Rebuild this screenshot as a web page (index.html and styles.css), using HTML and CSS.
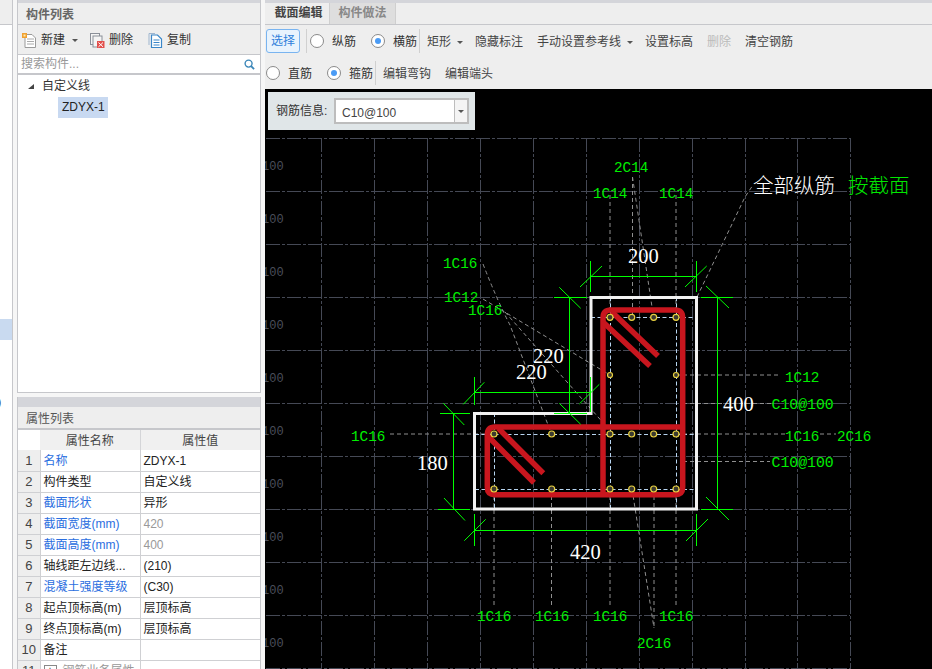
FILE: index.html
```html
<!DOCTYPE html>
<html lang="zh">
<head>
<meta charset="utf-8">
<title>截面编辑</title>
<link rel="stylesheet" href="styles.css">
</head>
<body>
<div class="app">
  <aside class="strip">
    <div class="strip-head"></div>
    <div class="strip-sel"></div>
    <div class="strip-text">)</div>
  </aside>

  <div class="left">
    <section class="panel panel-list">
      <div class="band band-thin"></div>
      <div class="panel-title">构件列表</div>
      <div class="list-tools">
        <span class="ltool ltool-new">
          <svg class="ico" viewBox="0 0 15 15"><path d="M3 1.5H10L13.5 5V14.5H3Z" fill="#fff" stroke="#9a9a9a"/><path d="M5 6H12M5 8.5H12M5 11H12" stroke="#aaa"/><rect x="0" y="0" width="5" height="5" fill="#f0a030"/><rect x="1.5" y="1.5" width="2" height="2" fill="#fde9b0"/></svg>
          新建<i class="caret"></i>
        </span>
        <span class="ltool ltool-del">
          <svg class="ico" viewBox="0 0 15 15"><rect x="0.5" y="0.5" width="9" height="11" fill="#f4f4f4" stroke="#8a8f98"/><rect x="3" y="3" width="9" height="11" fill="#f4f4f4" stroke="#8a8f98"/><rect x="7" y="8" width="7.5" height="7" fill="#e2504c"/><path d="M8.5 9.5L13 13.8M13 9.5L8.5 13.8" stroke="#fff"/></svg>
          删除
        </span>
        <span class="ltool ltool-copy">
          <svg class="ico" viewBox="0 0 15 15"><path d="M1 12V0.5H7" fill="none" stroke="#9fb6cf"/><path d="M3.5 2H9.5L13.5 6V14.5H3.5Z" fill="#fff" stroke="#3a86c8" stroke-width="1.2"/><path d="M5.5 7H11.5M5.5 9.5H11.5M5.5 12H11.5" stroke="#3a86c8"/></svg>
          复制
        </span>
      </div>
      <div class="search">
        <span>搜索构件...</span>
        <svg class="search-ico" viewBox="0 0 12 12"><circle cx="5" cy="5" r="3.8" fill="none" stroke="#3a86b8" stroke-width="1.5"/><path d="M7.8 7.8L11 11" stroke="#3a86b8" stroke-width="2"/></svg>
      </div>
      <div class="tree">
        <div class="tree-root"><i class="tree-arrow"></i>自定义线</div>
        <div class="tree-leaf">ZDYX-1</div>
      </div>
    </section>

    <section class="panel panel-props">
      <div class="band band-thick"></div>
      <div class="panel-title panel-title-props">属性列表</div>
      <table class="props">
        <colgroup><col class="c-num"><col class="c-name"><col class="c-val"></colgroup>
        <thead><tr><th class="blank"></th><th>属性名称</th><th>属性值</th></tr></thead>
        <tbody>
          <tr><td class="num">1</td><td class="blue">名称</td><td>ZDYX-1</td></tr>
          <tr><td class="num">2</td><td>构件类型</td><td>自定义线</td></tr>
          <tr><td class="num">3</td><td class="blue">截面形状</td><td>异形</td></tr>
          <tr><td class="num">4</td><td class="blue">截面宽度(mm)</td><td class="muted">420</td></tr>
          <tr><td class="num">5</td><td class="blue">截面高度(mm)</td><td class="muted">400</td></tr>
          <tr><td class="num">6</td><td>轴线距左边线...</td><td>(210)</td></tr>
          <tr><td class="num">7</td><td class="blue">混凝土强度等级</td><td>(C30)</td></tr>
          <tr><td class="num">8</td><td>起点顶标高(m)</td><td>层顶标高</td></tr>
          <tr><td class="num">9</td><td>终点顶标高(m)</td><td>层顶标高</td></tr>
          <tr><td class="num">10</td><td>备注</td><td></td></tr>
          <tr><td class="num">11</td><td class="muted"><i class="plus">+</i>钢筋业务属性</td><td></td></tr>
        </tbody>
      </table>
    </section>
  </div>

  <main class="right">
    <div class="band band-thin"></div>
    <div class="tabs">
      <span class="tab tab-on">截面编辑</span>
      <span class="tab tab-off">构件做法</span>
    </div>
    <div class="toolbar">
      <div class="row row-1">
        <button class="btn-select">选择</button>
        <i class="sep sep-a"></i>
        <label class="radio"><i class="dot"></i>纵筋</label>
        <label class="radio radio-on"><i class="dot"></i>横筋</label>
        <i class="sep sep-b"></i>
        <div class="tools">
          <span>矩形<i class="caret caret-tight"></i></span>
          <span>隐藏标注</span>
          <span>手动设置参考线<i class="caret caret-tight"></i></span>
          <span>设置标高</span>
          <span class="disabled">删除</span>
          <span>清空钢筋</span>
        </div>
      </div>
      <div class="row row-2">
        <label class="radio"><i class="dot"></i>直筋</label>
        <label class="radio radio-on"><i class="dot"></i>箍筋</label>
        <i class="sep sep-c"></i>
        <div class="tools">
          <span>编辑弯钩</span>
          <span>编辑端头</span>
        </div>
      </div>
    </div>
    <div class="canvas">
      <div class="info">
        <span class="info-label">钢筋信息:</span>
        <div class="combo"><span class="combo-text">C10@100</span><span class="combo-btn"><i class="caret"></i></span></div>
      </div>
      <svg class="draw" viewBox="265 89 667 580" width="667" height="580">
        <g class="grid">
          <path d="M266 138.5H850M266 191.5H850M266 244.5H850M266 297.5H850M266 350.5H850M266 403.5H850M266 456.5H850M266 509.5H850M266 562.5H850M266 615.5H850M266 668.5H850"/>
          <path d="M321.5 138V669M374.5 138V669M427.5 138V669M480.5 138V669M533.5 138V669M586.5 138V669M639.5 138V669M692.5 138V669M745.5 138V669M797.5 138V669M850.5 138V669"/>
        </g>
        <g class="axis">
          <text x="262" y="169.5">100</text><text x="262" y="222.5">100</text><text x="262" y="275.5">100</text><text x="262" y="328.5">100</text><text x="262" y="381.5">100</text>
          <text x="262" y="434.5">100</text><text x="262" y="487.5">100</text><text x="262" y="540.5">100</text><text x="262" y="593.5">100</text><text x="262" y="646.5">100</text>
        </g>
        <g class="leader">
          <path d="M610 195V317M676 195V317M632.5 177V317M632.5 177L653.5 317"/>
          <path d="M697 297L745 197L753 185"/>
          <path d="M494 489V605M551.5 489V605M610 489V605M676 489V605M654 489V628M632 489L654 628"/>
          <path d="M676 375H780M683 403.5H771M676 434H785M820 434H836M683 461.5H770"/>
          <path d="M390 434H494M483 264Q497 300 510 325L551.5 434M483 299L610 375M505 312L606 426"/>
        </g>
        <g class="axisline">
          <path d="M591 317.5H697M475 434.5H697M475 489.5H697M494.5 413V509M610.5 297V509M676.5 297V509"/>
        </g>
        <path class="concrete" d="M591 297.5H696.5V509H474.5V413.5H591Z"/>
        <g class="rebar">
          <path d="M603 427V318Q603 310 611 310H675Q682.7 310 682.7 318V487Q682.7 494.7 675 494.7H495Q487.3 494.7 487.3 487V435Q487.3 427 495 427H682.7M603 427V494.7"/>
          <path d="M611.7 311.7L658 356M602.7 321.7L650 366M498.3 428.3L543.3 473.3M486.7 435L534 482.7"/>
        </g>
        <g class="bars">
          <circle cx="610" cy="317.3" r="3"/><circle cx="631.7" cy="317.3" r="3"/><circle cx="653.7" cy="317.3" r="3"/><circle cx="676" cy="317.3" r="3"/>
          <circle cx="610" cy="375" r="2.5"/><circle cx="676" cy="375" r="2.5"/>
          <circle cx="494" cy="434" r="3"/><circle cx="551.7" cy="434" r="3"/><circle cx="610" cy="434" r="3"/><circle cx="631.7" cy="434" r="3"/><circle cx="653.7" cy="434" r="3"/><circle cx="676" cy="434" r="3"/>
          <circle cx="494" cy="489" r="3"/><circle cx="551.7" cy="489" r="3"/><circle cx="610" cy="489" r="3"/><circle cx="631.7" cy="489" r="3"/><circle cx="653.7" cy="489" r="3"/><circle cx="676" cy="489" r="3"/>
        </g>
        <g class="dim-lines">
          <path d="M590.5 276.5H696.5M590.5 261V292M696.5 261V292M685 287L706.7 266M580 287L602 266"/>
          <path d="M717.5 297V509M700.7 297.5H733M701 509.5H733M706 286L729 308M706 497L729 520"/>
          <path d="M569.5 297V413M554 297.5H587M554 413.5H587M559.3 287.3L580.7 308.3M559.3 403.3L580.7 424.3"/>
          <path d="M474.5 392.5H590.5M474.5 377V405M590.5 377V412M463.3 404.3L484.3 382.3M579.3 404L599.3 384.3"/>
          <path d="M453.5 413V509M440 413.5H470M438 509.5H470M443.3 403.3L464.3 425M444 498L465 520.5"/>
          <path d="M474.5 530.5H696.5M474.5 514V546M696.5 514V546M464.3 540.7L485.7 519.3M686 541L708 519"/>
        </g>
        <g class="rebar-text">
          <text x="614" y="171.7">2C14</text><text x="593" y="197.7">1C14</text><text x="659" y="197.7">1C14</text>
          <text x="443" y="267.7">1C16</text><text x="444" y="301.7">1C12</text><text x="468" y="315">1C16</text>
          <text x="351" y="441">1C16</text>
          <text x="785" y="381.7">1C12</text><text class="wide" x="771.5" y="409.3">C10@100</text>
          <text x="785" y="440.7">1C16</text><text x="837" y="440.7">2C16</text><text class="wide" x="771.5" y="467.3">C10@100</text>
          <text x="477" y="620.7">1C16</text><text x="535" y="620.7">1C16</text><text x="593" y="620.7">1C16</text><text x="659" y="620.7">1C16</text>
          <text x="637" y="647.7">2C16</text>
        </g>
        <g class="dim-text">
          <text x="628" y="262.7">200</text><text x="533" y="362.7">220</text><text x="516" y="379">220</text>
          <text x="417" y="470">180</text><text x="723" y="411">400</text><text x="570" y="559">420</text>
        </g>
        <text class="note note-white" x="753" y="193">全部纵筋</text>
        <text class="note note-green" x="848" y="193">按截面</text>
      </svg>
    </div>
  </main>
</div>
</body>
</html>
```

FILE: styles.css
```css
* { box-sizing: border-box; }
html, body { margin: 0; padding: 0; }
body {
  width: 932px;
  height: 669px;
  overflow: hidden;
  background: #f6f6f6;
  font: 12px/1.2 "Liberation Sans", "Noto Sans CJK SC", sans-serif;
  color: #333;
}
i { font-style: normal; }

.app { display: flex; width: 932px; height: 669px; }

/* far-left cropped navigator */
.strip { width: 13px; flex: none; height: 669px; background: #fff; border-right: 1px solid #c6c7cb; }
.strip-head { height: 25px; background: #eee; border-bottom: 1px solid #c6c7cb; }
.strip-sel { height: 21px; margin-top: 294px; background: #c9daf0; }
.strip-text { margin: 54px 0 0 -3px; font-size: 13px; color: #333; }

/* left column */
.left { width: 244px; flex: none; margin-left: 4px; margin-right: 4px; display: flex; flex-direction: column; height: 669px; }
.panel { background: #fff; border-left: 1px solid #c6c7cb; border-right: 1px solid #c6c7cb; display: flex; flex-direction: column; }
.panel-list { height: 393px; border-bottom: 1px solid #c6c7cb; }
.panel-props { margin-top: 4px; flex: 1; overflow: hidden; }

.band { background: #d4d5da; flex: none; }
.band-thin { height: 3px; }
.band-thick { height: 10px; }

.panel-title { height: 22px; flex: none; padding: 5px 0 0 8px; background: #eee; border-bottom: 1px solid #c6c7cb; color: #666; font-weight: bold; font-size: 12px; }
.panel-title-props { height: 23px; border-bottom: 2px solid #c6c7cb; padding-top: 5px; font-weight: normal; color: #555; }

.list-tools { height: 30px; flex: none; display: flex; align-items: center; background: #eee; border-bottom: 1px solid #c6c7cb; padding: 2px 0 0 4px; }
.ltool { display: flex; align-items: center; color: #333; }
.ico { width: 15px; height: 15px; margin-right: 4px; flex: none; }
.ltool-del { margin-left: 12px; }
.ltool-copy { margin-left: 15px; }
.caret { display: inline-block; width: 0; height: 0; border-left: 3px solid transparent; border-right: 3px solid transparent; border-top: 3px solid #555; margin-left: 7px; vertical-align: middle; }
.caret-tight { margin-left: 6px; margin-right: -2px; }

.search { height: 20px; flex: none; display: flex; align-items: center; justify-content: space-between; padding: 0 5px 0 3px; border-bottom: 2px solid #c6c7cb; color: #999; background: #fff; }
.search-ico { width: 11px; height: 11px; }

.tree { flex: 1; background: #fff; }
.tree-root { height: 22px; display: flex; align-items: center; padding-left: 24px; color: #333; position: relative; }
.tree-arrow { width: 0; height: 0; border-left: 6px solid transparent; border-bottom: 5px solid #444; margin-left: -14px; margin-right: 8px; }
.tree-leaf { width: 50px; height: 21px; margin-left: 40px; padding-left: 4px; line-height: 21px; background: #c8d9f1; color: #222; }

/* property table */
.props { width: 242px; table-layout: fixed; border-collapse: collapse; }
.c-num { width: 22px; }
.c-name { width: 100px; }
.props th { height: 20px; padding: 2px 0 0; background: #f0f0f0; font-weight: normal; color: #444; border-right: 1px solid #d4d5d8; text-align: center; }
.props th.blank { background: #fff; border-right: 0; }
.props td { height: 21px; padding: 2px 0 0 3px; border-bottom: 1px solid #cfd0d3; border-right: 1px solid #cfd0d3; color: #222; white-space: nowrap; overflow: hidden; }
.props td:last-child, .props th:last-child { border-right: 0; }
.props td.num { padding: 1px 0 0; background: #eee; text-align: center; color: #444; font-size: 13px; }
.props td.blue { color: #2a6ee0; }
.props td.muted { color: #999; }
.plus { display: inline-block; width: 13px; height: 13px; margin-right: 6px; border: 1px solid #888; text-align: center; line-height: 10px; color: #444; }

/* right column */
.right { flex: 1; display: flex; flex-direction: column; min-width: 0; height: 669px; }
.tabs { height: 22px; flex: none; display: flex; background: #eee; border-bottom: 1px solid #c6c7cb; font-weight: bold; }
.tab { display: flex; align-items: center; justify-content: center; height: 21px; }
.tab-on { width: 65px; padding-left: 3px; color: #444; border-right: 1px solid #cfcfcf; }
.tab-off { width: 66px; background: #dedede; color: #888; border-right: 1px solid #cfcfcf; }

.toolbar { height: 64px; flex: none; background: #eee; }
.row { height: 32px; display: flex; align-items: center; }
.row-1 { padding-left: 1px; }
.row-2 { padding-left: 1px; }
.btn-select { width: 34px; height: 24px; padding: 0; border: 1px solid #79b4f0; border-radius: 3px; background: #e8f3fd; color: #2f7fdb; font: inherit; }
.sep { display: block; width: 1px; height: 24px; background: #d0d0d0; flex: none; }
.sep-a { margin: 0 3px 0 6px; }
.sep-b { margin: 0 7px 0 2px; }
.sep-c { margin: 0 7px 0 2px; }
.radio { display: flex; align-items: center; color: #333; padding-top: 2px; }
.radio + .radio { margin-left: 15px; }
.dot { width: 14px; height: 14px; border-radius: 50%; border: 1px solid #8a8a8a; background: #fff; margin: -2px 8px 0 0; flex: none; display: flex; align-items: center; justify-content: center; }
.radio-on .dot::after { content: ""; width: 6px; height: 6px; border-radius: 50%; background: #4a9bf5; }
.tools { display: flex; gap: 14px; color: #444; padding-top: 2px; }
.disabled { color: #bbb; }

/* drawing surface */
.canvas { flex: 1; position: relative; background: #000; overflow: hidden; }
.draw { display: block; }
.info { position: absolute; left: 3px; top: 3px; width: 207px; height: 38px; background: #e0e6e8; display: flex; align-items: center; padding-left: 8px; color: #333; }
.info-label { width: 58px; flex: none; padding-top: 1px; }
.combo { width: 135px; height: 26px; border: 2px solid #bdbdbd; background: #fff; display: flex; }
.combo-text { flex: 1; padding: 1px 0 0 6px; line-height: 24px; color: #444; }
.combo-btn { width: 13px; border-left: 1px solid #bdbdbd; background: #f4f4f4; display: flex; align-items: center; justify-content: center; }
.combo-btn .caret { margin: 0; }

.grid path { fill: none; stroke: #454955; stroke-width: 1; stroke-dasharray: 14 2 3 2; }
.axis text { fill: #4a4e5a; font: 12px "Liberation Mono", monospace; }
.leader path { fill: none; stroke: #8f8f8f; stroke-width: 1; stroke-dasharray: 4 3; }
.axisline path { fill: none; stroke: #b7d4f0; stroke-width: 1; stroke-dasharray: 4 2.5; }
.concrete { fill: none; stroke: #f2f2f2; stroke-width: 3; }
.rebar path { fill: none; stroke: #c8161e; stroke-width: 5.5; }
.bars circle { fill: #3a3a30; stroke: #e8d040; stroke-width: 1.2; }
.dim-lines path { fill: none; stroke: #00ff00; stroke-width: 1; }
.rebar-text text { fill: #00f000; font: 14.3px "Liberation Mono", monospace; }
.rebar-text text.wide { font-size: 14.8px; }
.dim-text text { fill: #fff; font: 20.5px "Liberation Serif", serif; }
.note { font: 300 20.5px "Noto Sans CJK SC", sans-serif; }
.note-white { fill: #fff; }
.note-green { fill: #00e800; }
```
